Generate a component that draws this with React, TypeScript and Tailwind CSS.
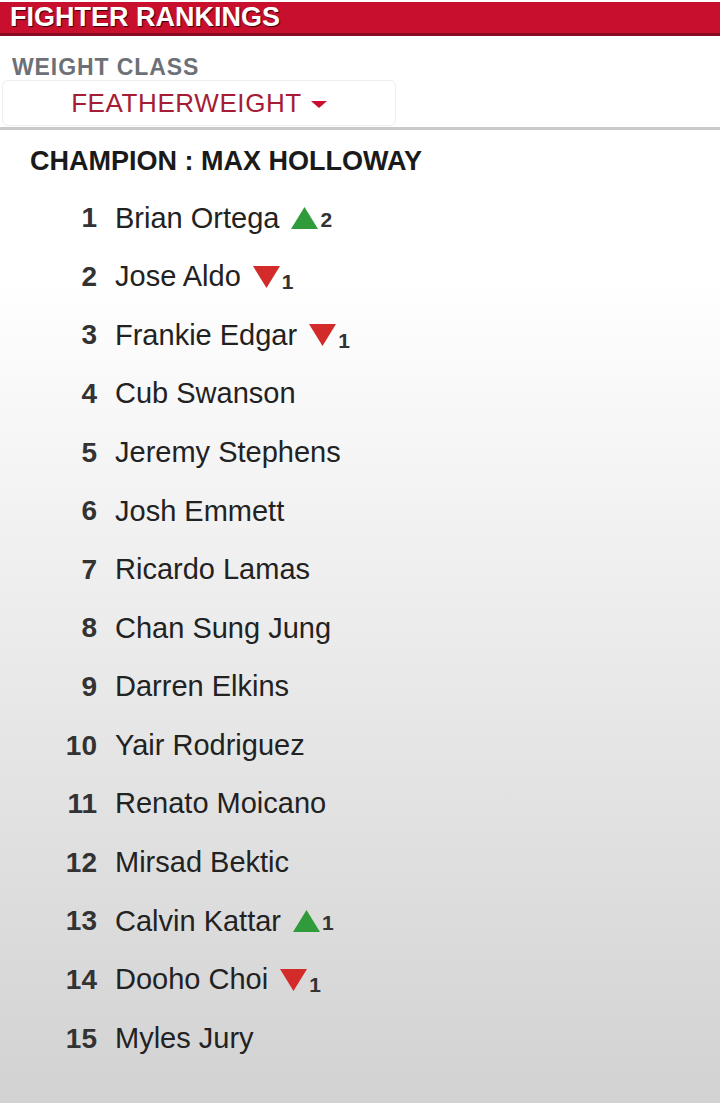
import React from 'react';

type Move = { dir: 'up' | 'down'; n: number } | null;

interface Fighter {
  rank: number;
  name: string;
  move: Move;
}

const fighters: Fighter[] = [
  { rank: 1, name: 'Brian Ortega', move: { dir: 'up', n: 2 } },
  { rank: 2, name: 'Jose Aldo', move: { dir: 'down', n: 1 } },
  { rank: 3, name: 'Frankie Edgar', move: { dir: 'down', n: 1 } },
  { rank: 4, name: 'Cub Swanson', move: null },
  { rank: 5, name: 'Jeremy Stephens', move: null },
  { rank: 6, name: 'Josh Emmett', move: null },
  { rank: 7, name: 'Ricardo Lamas', move: null },
  { rank: 8, name: 'Chan Sung Jung', move: null },
  { rank: 9, name: 'Darren Elkins', move: null },
  { rank: 10, name: 'Yair Rodriguez', move: null },
  { rank: 11, name: 'Renato Moicano', move: null },
  { rank: 12, name: 'Mirsad Bektic', move: null },
  { rank: 13, name: 'Calvin Kattar', move: { dir: 'up', n: 1 } },
  { rank: 14, name: 'Dooho Choi', move: { dir: 'down', n: 1 } },
  { rank: 15, name: 'Myles Jury', move: null },
];

const MoveBadge: React.FC<{ move: Move }> = ({ move }) => {
  if (!move) return null;
  const up = move.dir === 'up';
  return (
    <span className="ml-[12px] flex items-center">
      <svg width="27" height="22" viewBox="0 0 27 22" className="block">
        {up ? (
          <polygon points="13.5,0 27,22 0,22" fill="#2f9b3a" />
        ) : (
          <polygon points="0,0 27,0 13.5,22" fill="#d32a2a" />
        )}
      </svg>
      <span className={`ml-[2px] text-[21px] font-bold text-[#333] ${up ? 'mt-[3px]' : 'mt-[10px]'}`}>{move.n}</span>
    </span>
  );
};

export default function App() {
  return (
    <div className="min-h-screen flex flex-col bg-white [font-family:'Liberation_Sans',Arial,sans-serif]">
      {/* Header */}
      <div className="mt-[2px] h-[34px] bg-[#c8102e] border-b-[3px] border-[#860b1f] px-[10px]">
        <h1 className="text-[27px] leading-[31px] font-bold text-white [text-shadow:1px_1px_1px_#3a0008]">
          FIGHTER RANKINGS
        </h1>
      </div>

      {/* Weight class selector */}
      <div className="pt-[18px]">
        <div className="pl-[12px] text-[23px] leading-[26px] font-bold tracking-[0.9px] text-[#6d7177]">
          WEIGHT CLASS
        </div>
        <div className="ml-[2px] w-[394px] h-[46px] rounded-md border border-[#eeeeee] bg-white flex items-center justify-center">
          <span className="text-[26px] tracking-[0.6px] text-[#a51d35]">FEATHERWEIGHT</span>
          <svg width="16" height="7" viewBox="0 0 16 7" className="ml-[9px] mt-[2px]">
            <polygon points="0,0 16,0 8,7" fill="#c8102e" />
          </svg>
        </div>
        <div className="mt-[1px] h-[3px] bg-[#c9c9c9]" />
      </div>

      {/* Rankings list */}
      <div className="flex-1 pt-[14px] bg-linear-to-b from-white from-[15%] to-[#d2d2d2]">
        <div className="pl-[30px] text-[27px] leading-[34px] font-bold text-[#1a1a1a]">
          CHAMPION : MAX HOLLOWAY
        </div>
        <ul className="mt-[11px]">
          {fighters.map((f) => (
            <li key={f.rank} className="h-[58.6px] flex items-center">
              <span className="w-[97px] text-right text-[28px] font-bold text-[#333]">{f.rank}</span>
              <span className="ml-[18px] text-[29px] text-[#222]">{f.name}</span>
              <MoveBadge move={f.move} />
            </li>
          ))}
        </ul>
      </div>
    </div>
  );
}
